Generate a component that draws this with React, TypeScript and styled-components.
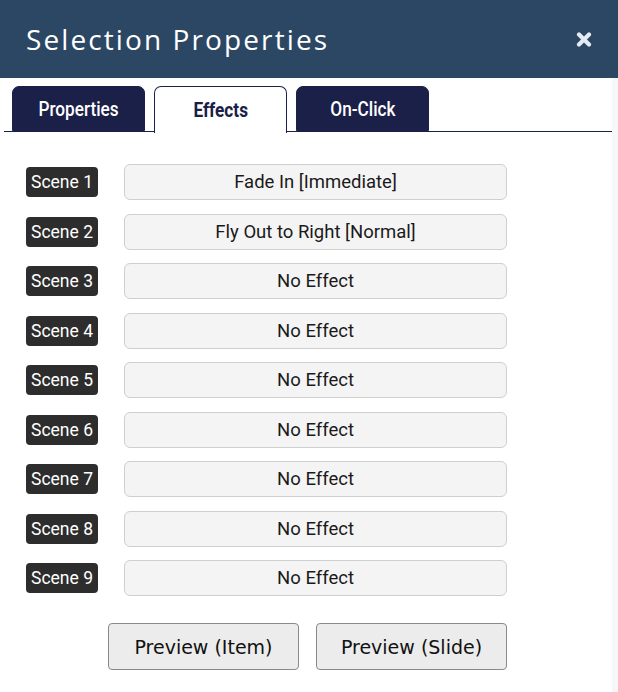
import React from 'react';
import styled, { createGlobalStyle } from 'styled-components';

const scenes = [
  'Fade In [Immediate]',
  'Fly Out to Right [Normal]',
  'No Effect',
  'No Effect',
  'No Effect',
  'No Effect',
  'No Effect',
  'No Effect',
  'No Effect'
];

const tabs = ['Properties', 'Effects', 'On-Click'];

const GlobalStyle = createGlobalStyle`
  html, body {
    margin: 0;
    padding: 0;
    background: #f6f7f8;
  }
`;

const App = () => {
  return (
    <>
      <GlobalStyle />
      <Panel>
        <Header>
          <Title>Selection Properties</Title>
          <CloseButton aria-label="close">
            <svg width="16" height="15" viewBox="0 0 16 15">
              <path
                d="M3 2.5 L13 12.5 M13 2.5 L3 12.5"
                stroke="#e4ebf2"
                strokeWidth="4.2"
                strokeLinecap="round"
              />
            </svg>
          </CloseButton>
        </Header>
        <Body>
          <TabBar>
            {tabs.map((t) => (
              <Tab key={t} $active={t === 'Effects'}>
                <TabText>{t}</TabText>
              </Tab>
            ))}
          </TabBar>
          <SceneList>
            {scenes.map((effect, i) => (
              <SceneRow key={i}>
                <SceneLabel>Scene {i + 1}</SceneLabel>
                <EffectBox>{effect}</EffectBox>
              </SceneRow>
            ))}
            <ButtonRow>
              <PreviewButton>Preview (Item)</PreviewButton>
              <PreviewButton>Preview (Slide)</PreviewButton>
            </ButtonRow>
          </SceneList>
        </Body>
      </Panel>
    </>
  );
};

export default App;

const Panel = styled.div`
  width: 618px;
  height: 692px;
  display: flex;
  flex-direction: column;
`;

const Header = styled.div`
  height: 78px;
  background: #2b4764;
  display: flex;
  align-items: center;
  justify-content: space-between;
  padding: 0 26px 0 26px;
  box-sizing: border-box;
`;

const Title = styled.h1`
  margin: 0;
  color: #ffffff;
  font-family: 'Open Sans', 'DejaVu Sans', sans-serif;
  font-weight: 400;
  font-size: 28px;
  letter-spacing: 2.1px;
`;

const CloseButton = styled.button`
  border: 0;
  background: transparent;
  padding: 0;
  width: 16px;
  height: 15px;
  display: flex;
`;

const Body = styled.div`
  flex: 1;
  width: 612px;
  background: #ffffff;
  padding-top: 8px;
  box-sizing: border-box;
`;

const TabBar = styled.div`
  display: flex;
  gap: 9px;
  margin-left: 4px;
  padding-left: 8px;
  height: 45px;
  border-bottom: 1.5px solid #1b2048;
`;

const Tab = styled.div<{ $active?: boolean }>`
  width: 133px;
  box-sizing: border-box;
  display: flex;
  align-items: center;
  justify-content: center;
  border-radius: 7px 7px 0 0;
  font-family: Roboto, 'Liberation Sans', sans-serif;
  font-size: 20px;
  font-weight: ${(p) => (p.$active ? 700 : 500)};
  color: ${(p) => (p.$active ? '#1b2048' : '#ffffff')};
  background: ${(p) => (p.$active ? '#ffffff' : '#1b2048')};
  border: 1px solid #1b2048;
  border-bottom: ${(p) => (p.$active ? '0' : '1px solid #1b2048')};
  margin-bottom: ${(p) => (p.$active ? '-1.5px' : '0')};
`;

/* the tab face is a narrow cut of the sans */
const TabText = styled.span`
  display: inline-block;
  transform: scaleX(0.86);
`;

const SceneList = styled.div`
  display: flex;
  flex-direction: column;
  gap: 13.5px;
  width: 481px;
  margin: 32px 0 0 26px;
`;

const SceneRow = styled.div`
  display: flex;
  align-items: center;
  gap: 26px;
  height: 36px;
`;

const SceneLabel = styled.span`
  width: 72px;
  height: 30px;
  box-sizing: border-box;
  background: #2d2d2d;
  color: #ffffff;
  border-radius: 4px;
  display: flex;
  align-items: center;
  justify-content: center;
  font-family: Roboto, 'Liberation Sans', sans-serif;
  font-size: 17.5px;
`;

const EffectBox = styled.div`
  flex: 1;
  height: 36px;
  box-sizing: border-box;
  background: #f4f4f4;
  border: 1px solid #cfcfcf;
  border-radius: 6px;
  display: flex;
  align-items: center;
  justify-content: center;
  font-family: Roboto, 'Liberation Sans', sans-serif;
  font-size: 18.5px;
  color: #1a1a1a;
`;

const ButtonRow = styled.div`
  display: flex;
  justify-content: flex-end;
  gap: 17px;
  margin-top: 13.5px;
`;

const PreviewButton = styled.button`
  width: 191px;
  height: 47px;
  background: #ececec;
  border: 1px solid #8a8a8a;
  border-radius: 4px;
  font-family: 'DejaVu Sans', sans-serif;
  font-size: 19px;
  color: #111111;
  padding: 0;
`;
